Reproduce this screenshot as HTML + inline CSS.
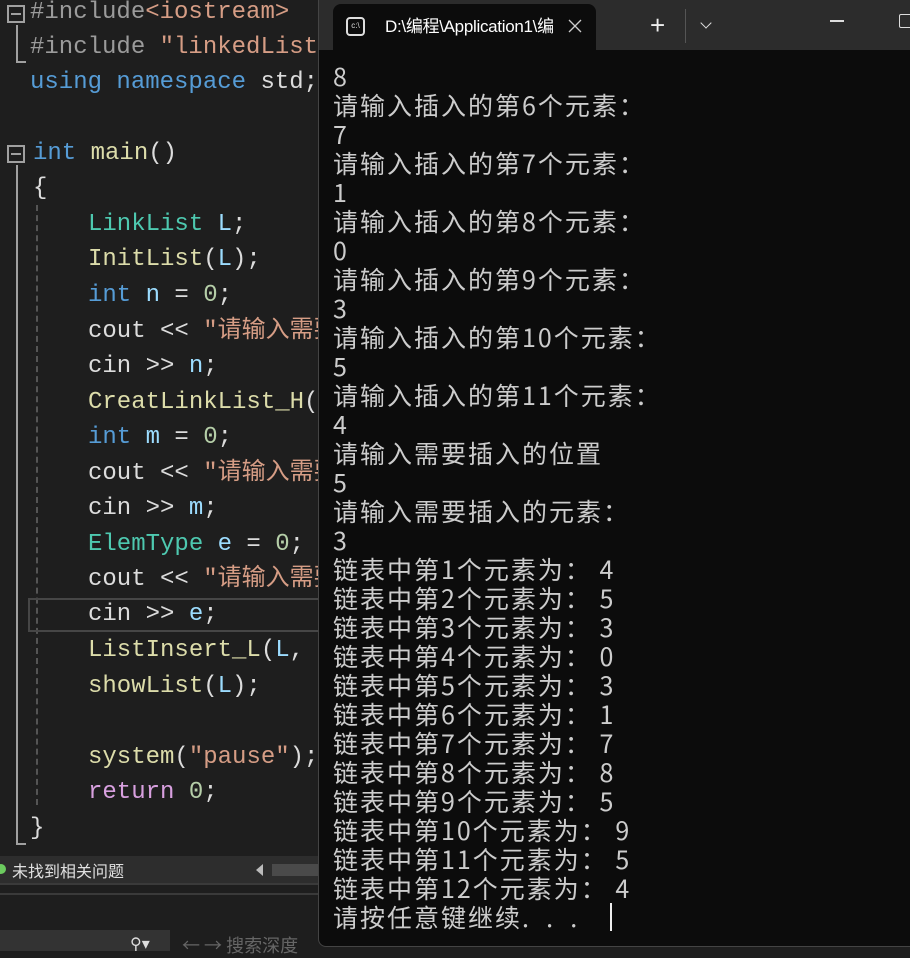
<!DOCTYPE html>
<html><head><meta charset="utf-8">
<style>
*{margin:0;padding:0;box-sizing:border-box}
body{width:910px;height:951px;background:#1e1e1e;position:relative;overflow:hidden;font-family:"Liberation Mono","Noto Sans CJK SC",monospace}
.c{position:absolute;left:0;font-size:24px;line-height:35px;white-space:pre;color:#dcdcdc;font-family:"Liberation Mono","Noto Sans CJK SC",monospace}
.kw{color:#569cd6}.ty{color:#4ec9b0}.fn{color:#dcdcaa}.st{color:#d69d85}.va{color:#9cdcfe}.nu{color:#b5cea8}.pp{color:#9b9b9b}.rt{color:#d8a0df}
.t{position:absolute;left:333px;font-size:25px;letter-spacing:2px;line-height:29px;color:#cccccc;white-space:pre;font-family:"Noto Sans CJK SC","Liberation Sans",sans-serif}
</style></head><body>
<div style="position:absolute;left:7px;top:5px;width:18px;height:18px;border:2px solid #a0a0a0"></div>
<div style="position:absolute;left:11px;top:13px;width:10px;height:2px;background:#a0a0a0"></div>
<div style="position:absolute;left:16px;top:25px;width:2px;height:38px;background:#a0a0a0"></div>
<div style="position:absolute;left:16px;top:61px;width:10px;height:2px;background:#a0a0a0"></div>
<div style="position:absolute;left:7px;top:145px;width:18px;height:18px;border:2px solid #a0a0a0"></div>
<div style="position:absolute;left:11px;top:153px;width:10px;height:2px;background:#a0a0a0"></div>
<div style="position:absolute;left:16px;top:165px;width:2px;height:680px;background:#a0a0a0"></div>
<div style="position:absolute;left:16px;top:843px;width:10px;height:2px;background:#a0a0a0"></div>
<div style="position:absolute;left:36px;top:205px;width:0;height:600px;border-left:2px dashed #555"></div>
<div style="position:absolute;left:28px;top:598px;width:292px;height:34px;border:2px solid #464646"></div>

<div class="c" style="top:-5px;left:30px"><span class="pp">#include</span><span class="st">&lt;iostream&gt;</span></div>
<div class="c" style="top:30px;left:30px"><span class="pp">#include</span> <span class="st">"linkedList.h"</span></div>
<div class="c" style="top:65px;left:30px"><span class="kw">using namespace</span> std;</div>
<div class="c" style="top:136px;left:33px"><span class="kw">int</span> <span class="fn">main</span>()</div>
<div class="c" style="top:171px;left:33px">{</div>
<div class="c" style="top:207px;left:88px"><span class="ty">LinkList</span> <span class="va">L</span>;</div>
<div class="c" style="top:242px;left:88px"><span class="fn">InitList</span>(<span class="va">L</span>);</div>
<div class="c" style="top:278px;left:88px"><span class="kw">int</span> <span class="va">n</span> = <span class="nu">0</span>;</div>
<div class="c" style="top:314px;left:88px">cout &lt;&lt; <span class="st">"请输入需要插入</span></div>
<div class="c" style="top:349px;left:88px">cin &gt;&gt; <span class="va">n</span>;</div>
<div class="c" style="top:385px;left:88px"><span class="fn">CreatLinkList_H</span>(</div>
<div class="c" style="top:420px;left:88px"><span class="kw">int</span> <span class="va">m</span> = <span class="nu">0</span>;</div>
<div class="c" style="top:456px;left:88px">cout &lt;&lt; <span class="st">"请输入需要插入</span></div>
<div class="c" style="top:491px;left:88px">cin &gt;&gt; <span class="va">m</span>;</div>
<div class="c" style="top:527px;left:88px"><span class="ty">ElemType</span> <span class="va">e</span> = <span class="nu">0</span>;</div>
<div class="c" style="top:562px;left:88px">cout &lt;&lt; <span class="st">"请输入需要插入</span></div>
<div class="c" style="top:597px;left:88px">cin &gt;&gt; <span class="va">e</span>;</div>
<div class="c" style="top:633px;left:88px"><span class="fn">ListInsert_L</span>(<span class="va">L</span>, m</div>
<div class="c" style="top:669px;left:88px"><span class="fn">showList</span>(<span class="va">L</span>);</div>
<div class="c" style="top:740px;left:88px"><span class="fn">system</span>(<span class="st">"pause"</span>);</div>
<div class="c" style="top:775px;left:88px"><span class="rt">return</span> <span class="nu">0</span>;</div>
<div class="c" style="top:811px;left:30px">}</div>

<div style="position:absolute;left:0;top:856px;width:320px;height:27px;background:#2d2d2d"></div>
<div style="position:absolute;left:-4px;top:864px;width:10px;height:10px;border-radius:50%;background:#6ccb5f"></div>
<div style="position:absolute;left:12px;top:858px;font-size:16px;line-height:24px;color:#e0e0e0;font-family:'Noto Sans CJK SC',sans-serif">未找到相关问题</div>
<div style="position:absolute;left:256px;top:864px;width:0;height:0;border-top:6px solid transparent;border-bottom:6px solid transparent;border-right:7px solid #bbb"></div>
<div style="position:absolute;left:272px;top:864px;width:48px;height:12px;background:#4a4a4a"></div>
<div style="position:absolute;left:0;top:883px;width:320px;height:2px;background:#3a3a3a"></div>
<div style="position:absolute;left:0;top:893px;width:320px;height:2px;background:#3a3a3a"></div>
<div style="position:absolute;left:0;top:930px;width:170px;height:21px;background:#333"></div>
<div style="position:absolute;left:130px;top:934px;font-size:16px;color:#ddd">⚲▾</div>
<div style="position:absolute;left:182px;top:932px;font-size:18px;color:#666;font-family:'Noto Sans CJK SC',sans-serif">← → 搜索深度</div>

<div style="position:absolute;left:318px;top:0;width:600px;height:947px;background:#0c0c0c;border:1px solid #444;border-radius:0 0 8px 8px"></div>
<div style="position:absolute;left:319px;top:0;width:591px;height:50px;background:#2c2c2c"></div>
<div style="position:absolute;left:333px;top:4px;width:263px;height:46px;background:#0c0c0c;border-radius:8px 8px 0 0"></div>
<div style="position:absolute;left:346px;top:17px;width:19px;height:19px;border:2px solid #ddd;border-radius:4px;font-size:8px;color:#ddd;line-height:14px;text-align:center;font-family:'Liberation Sans'">c:\</div>
<div style="position:absolute;left:385px;top:14px;width:203px;overflow:hidden;white-space:nowrap;font-size:17px;line-height:26px;color:#fff;font-family:'Liberation Sans','Noto Sans CJK SC',sans-serif;letter-spacing:-0.3px">D:\编程\Application1\编</div>
<svg style="position:absolute;left:568px;top:19px" width="14" height="14"><path d="M1 1L13 13M13 1L1 13" stroke="#ccc" stroke-width="1.3"/></svg>
<div style="position:absolute;left:650px;top:10px;font-size:26px;color:#eee;font-family:'Liberation Sans'">+</div>
<div style="position:absolute;left:685px;top:9px;width:1px;height:34px;background:#555"></div>
<div style="position:absolute;left:702px;top:19px;width:8px;height:8px;border-right:1.5px solid #ddd;border-bottom:1.5px solid #ddd;transform:rotate(45deg)"></div>
<div style="position:absolute;left:830px;top:20px;width:14px;height:1.5px;background:#ddd"></div>
<div style="position:absolute;left:899px;top:14px;width:14px;height:14px;border:1.5px solid #ddd;border-radius:2px"></div>

<div class="t" style="top:62px">8</div>
<div class="t" style="top:91px">请输入插入的第6个元素：</div>
<div class="t" style="top:120px">7</div>
<div class="t" style="top:149px">请输入插入的第7个元素：</div>
<div class="t" style="top:178px">1</div>
<div class="t" style="top:207px">请输入插入的第8个元素：</div>
<div class="t" style="top:236px">0</div>
<div class="t" style="top:265px">请输入插入的第9个元素：</div>
<div class="t" style="top:294px">3</div>
<div class="t" style="top:323px">请输入插入的第10个元素：</div>
<div class="t" style="top:352px">5</div>
<div class="t" style="top:381px">请输入插入的第11个元素：</div>
<div class="t" style="top:410px">4</div>
<div class="t" style="top:439px">请输入需要插入的位置</div>
<div class="t" style="top:468px">5</div>
<div class="t" style="top:497px">请输入需要插入的元素：</div>
<div class="t" style="top:526px">3</div>
<div class="t" style="top:555px">链表中第1个元素为： 4</div>
<div class="t" style="top:584px">链表中第2个元素为： 5</div>
<div class="t" style="top:613px">链表中第3个元素为： 3</div>
<div class="t" style="top:642px">链表中第4个元素为： 0</div>
<div class="t" style="top:671px">链表中第5个元素为： 3</div>
<div class="t" style="top:700px">链表中第6个元素为： 1</div>
<div class="t" style="top:729px">链表中第7个元素为： 7</div>
<div class="t" style="top:758px">链表中第8个元素为： 8</div>
<div class="t" style="top:787px">链表中第9个元素为： 5</div>
<div class="t" style="top:816px">链表中第10个元素为： 9</div>
<div class="t" style="top:845px">链表中第11个元素为： 5</div>
<div class="t" style="top:874px">链表中第12个元素为： 4</div>
<div class="t" style="top:903px">请按任意键继续.  .  .</div>
<div style="position:absolute;left:610px;top:903px;width:2px;height:28px;background:#eee"></div>
</body></html>
